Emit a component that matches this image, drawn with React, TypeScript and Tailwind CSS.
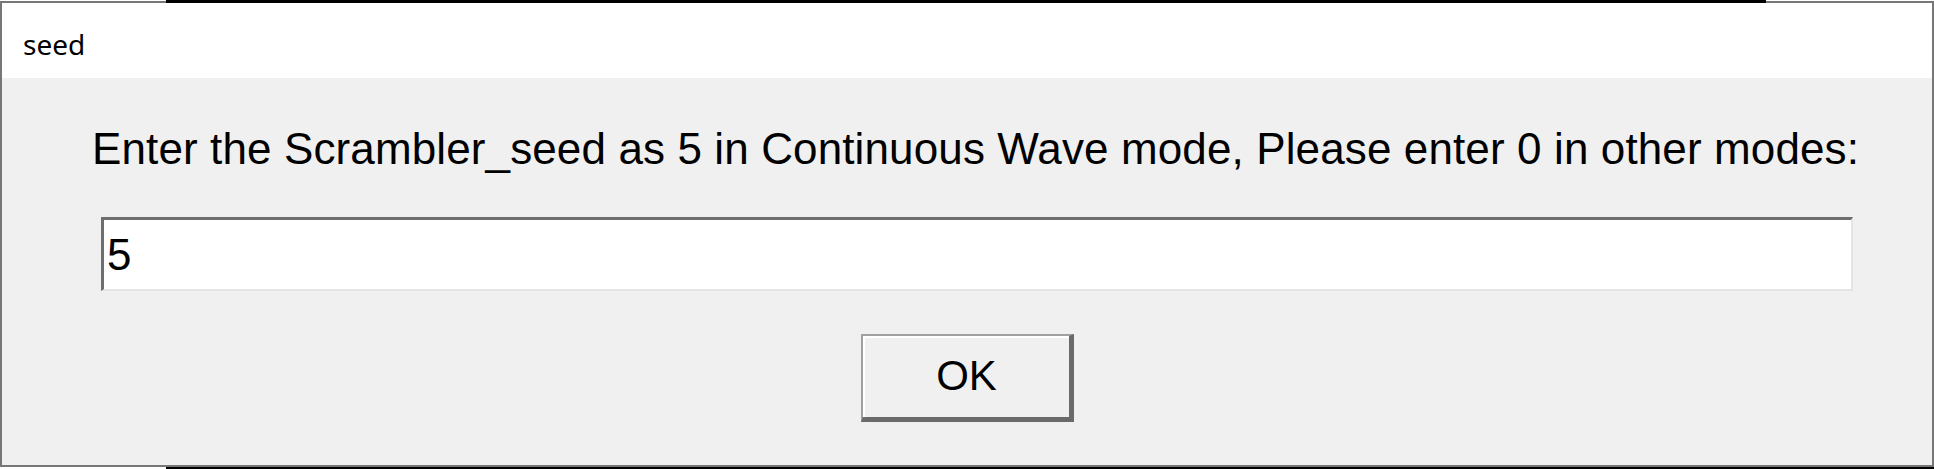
export default function App() {
  return (
    <div className="w-[1934px] h-[469px] bg-white flex flex-col overflow-hidden">
      {/* strip of the window behind, top */}
      <div className="h-[1px] flex">
        <div className="w-[166px] bg-white" />
        <div className="w-[1600px] bg-black" />
        <div className="flex-1 bg-white" />
      </div>
      <div className="h-[2px] flex">
        <div className="w-[166px] bg-[#777777]" />
        <div className="w-[1600px] bg-black" />
        <div className="flex-1 bg-[#777777]" />
      </div>

      <div className="flex-1 flex flex-col border-x-2 border-b-2 border-[#777777]">
        <div className="h-[75px] bg-white flex items-center pl-[21px] pt-[6px]">
          <span className="text-[28px] text-black" style={{ fontFamily: '"Noto Sans", sans-serif' }}>seed</span>
        </div>

        <div className="flex-1 bg-[#f0f0f0] flex flex-col" style={{ fontFamily: '"Liberation Sans", Arial, sans-serif' }}>
          <div className="mt-[49px] pl-[90px] text-[44px] tracking-[0.12px] leading-none text-black whitespace-nowrap">
            Enter the Scrambler_seed as 5 in Continuous Wave mode, Please enter 0 in other modes:
          </div>

          <div className="mt-[46px] ml-[99px] mr-[79px] h-[74px] border-t-[3px] border-l-[3px] border-t-[#6e6e6e] border-l-[#6e6e6e] border-b-2 border-r-2 border-b-[#e4e4e4] border-r-[#e4e4e4] bg-white flex items-center">
            <input
              defaultValue="5"
              className="w-full h-full bg-white outline-none pl-[3px] text-[44px] text-black"
              style={{ fontFamily: '"Liberation Sans", Arial, sans-serif' }}
            />
          </div>

          <div className="flex-1 flex items-center justify-center">
            <button className="w-[213px] h-[88px] bg-[#f0f0f0] border-t-2 border-l-2 border-t-[#a0a0a0] border-l-[#a0a0a0] border-b-[5px] border-r-[5px] border-b-[#6a6a6a] border-r-[#6a6a6a] flex">
              <span className="flex-1 flex items-center justify-center border-t-2 border-l-2 border-white text-[42px] leading-none text-black pb-[3px]">
                OK
              </span>
            </button>
          </div>
        </div>
      </div>

      <div className="h-[2px] flex">
        <div className="w-[166px] bg-white" />
        <div className="flex-1 bg-black" />
      </div>
    </div>
  );
}
